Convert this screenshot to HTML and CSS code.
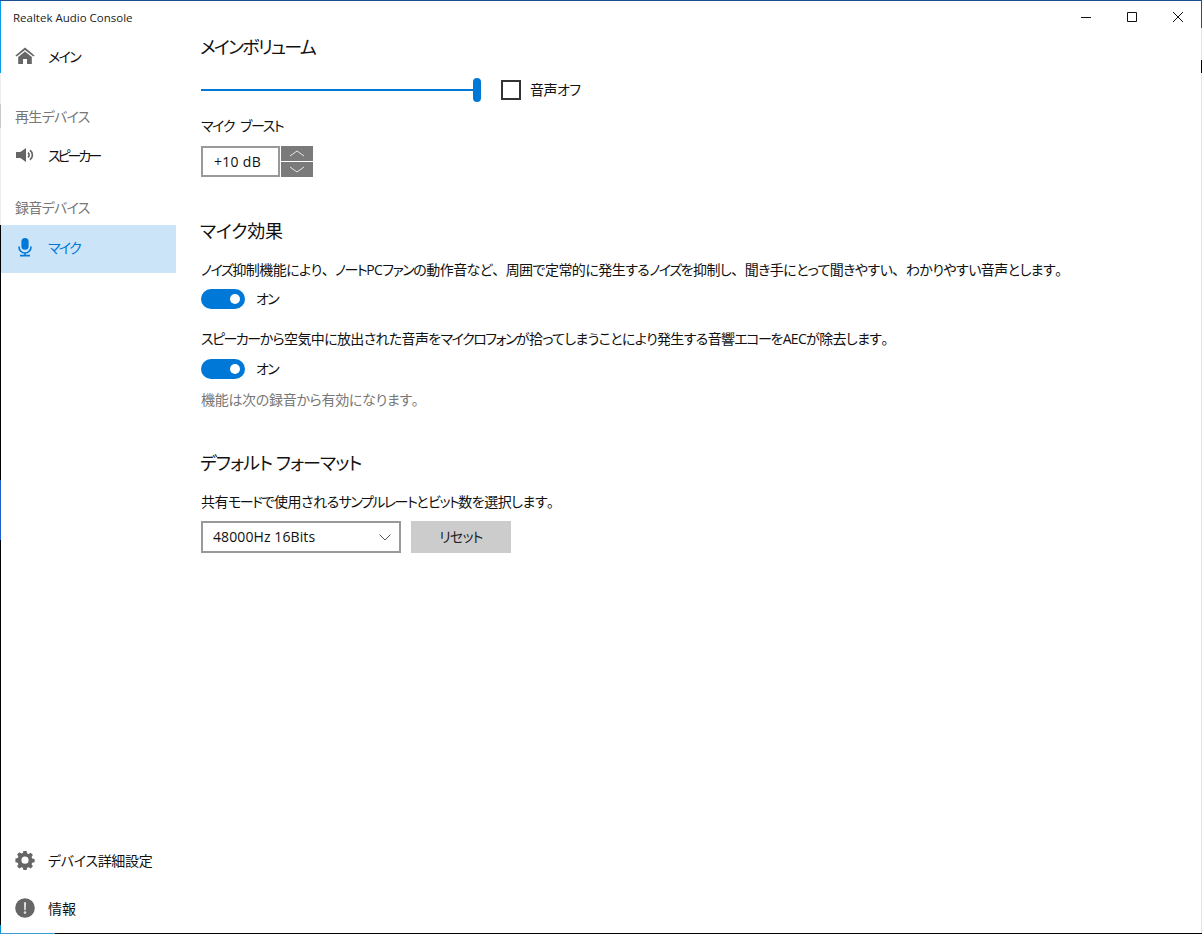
FILE: index.html
```html
<!DOCTYPE html>
<html lang="ja">
<head>
<meta charset="utf-8">
<title>Realtek Audio Console</title>
<link rel="stylesheet" href="styles.css">
</head>
<body>
<div class="window">
  <header class="titlebar">
    <span class="app-title">Realtek Audio Console</span>
    <div class="controls">
      <span class="ctl"><svg width="12" height="12" viewBox="0 0 12 12"><path d="M1 6.5h10" stroke="#111" fill="none"/></svg></span>
      <span class="ctl"><svg width="12" height="12" viewBox="0 0 12 12"><path d="M1.5 1.5h9v9h-9z" stroke="#111" fill="none"/></svg></span>
      <span class="ctl"><svg width="12" height="12" viewBox="0 0 12 12"><path d="M1 1l10 10M11 1L1 11" stroke="#111" fill="none"/></svg></span>
    </div>
  </header>
  <div class="body">
    <nav class="sidebar">
      <div class="nav-top">
        <a class="item">
          <svg class="icon" viewBox="0 0 20 20"><path d="M10 1.6 L0.4 9.4 L1.6 10.6 L10 3.9 L18.4 10.6 L19.6 9.4 Z M3.2 11 L10 5.6 L16.8 11 V18 H12 V13 H8 V18 H3.2 Z" fill="#666"/></svg>
          <span class="tight">メイン</span>
        </a>
        <div class="label label-play">再生デバイス</div>
        <a class="item">
          <svg class="icon" viewBox="0 0 20 20"><path d="M1 7 H5.4 L11 3 V17 L5.4 13 H1 Z" fill="#666"/><path d="M13 7.6 A3.2 3.2 0 0 1 13 12.4 M15 5.2 A6 6 0 0 1 15 14.8" stroke="#666" stroke-width="1.7" fill="none"/></svg>
          <span class="xtight">スピーカー</span>
        </a>
        <div class="label label-rec">録音デバイス</div>
        <a class="item active">
          <svg class="icon" viewBox="0 0 20 20"><rect x="6.4" y="1" width="7.2" height="11.8" rx="3.6" fill="#0078d7"/><path d="M4 9.6 V10 A6 6 0 0 0 16 10 V9.6 M10 16 V18.2 M5 18.6 H15" stroke="#0078d7" stroke-width="1.6" fill="none"/></svg>
          <span class="tight">マイク</span>
        </a>
      </div>
      <div class="nav-bottom">
        <a class="item">
          <svg class="icon" viewBox="0 0 20 20"><path d="M8.4 1h3.2l.5 2.4 1.5.6 2.1-1.3 2.2 2.2-1.3 2.1.6 1.5 2.4.5v3.2l-2.4.5-.6 1.5 1.3 2.1-2.2 2.2-2.1-1.3-1.5.6-.5 2.4H8.4l-.5-2.4-1.5-.6-2.1 1.3-2.2-2.2 1.3-2.1-.6-1.5-2.4-.5V8.5l2.4-.5.6-1.5-1.3-2.1 2.2-2.2 2.1 1.3 1.5-.6z M10 6.6a3.6 3.6 0 1 0 0 7.2 3.6 3.6 0 0 0 0-7.2z" fill="#666" fill-rule="evenodd"/></svg>
          <span class="slight">デバイス詳細設定</span>
        </a>
        <a class="item">
          <svg class="icon" viewBox="0 0 20 20"><circle cx="10" cy="10" r="9.8" fill="#666"/><path d="M8.9 4.2 h2.2 l-.3 8 h-1.6z" fill="#ddd"/><circle cx="10" cy="14.6" r="1.3" fill="#ddd"/></svg>
          <span>情報</span>
        </a>
      </div>
    </nav>
    <main class="content">
      <h2 class="heading h-volume">メインボリューム</h2>
      <div class="volume-row">
        <div class="slider"><span class="thumb"></span></div>
        <span class="checkbox"></span>
        <span class="text mute-label">音声オフ</span>
      </div>
      <div class="text boost-label">マイク ブースト</div>
      <div class="spin">
        <div class="spin-value">+10 dB</div>
        <div class="spin-buttons">
          <span class="spin-btn"><svg width="16" height="7" viewBox="0 0 16 7"><path d="M1 6 L8 1 L15 6" stroke="#e6e6e6" fill="none"/></svg></span>
          <span class="spin-btn"><svg width="16" height="7" viewBox="0 0 16 7"><path d="M1 1 L8 6 L15 1" stroke="#e6e6e6" fill="none"/></svg></span>
        </div>
      </div>
      <h2 class="heading h-effect">マイク効果</h2>
      <p class="text para p-first"><span class="k">ノイズ</span>抑制機能により<span class="fw">、</span><span class="k">ノート</span>PC<span class="k">ファン</span>の動作音など<span class="fw">、</span>周囲で定常的に発生する<span class="k">ノイズ</span>を抑制し<span class="fw">、</span>聞き手にとって聞きやすい<span class="fw">、</span>わかりやすい音声とします<span class="fw">。</span></p>
      <div class="toggle-row toggle-first"><span class="toggle"><span class="knob"></span></span><span class="text on">オン</span></div>
      <p class="text para p-second"><span class="k">スピーカー</span>から空気中に放出された音声を<span class="k">マイクロフォン</span>が拾ってしまうことにより発生する音響<span class="k">エコー</span>をAECが除去します<span class="fw">。</span></p>
      <div class="toggle-row"><span class="toggle"><span class="knob"></span></span><span class="text on">オン</span></div>
      <p class="text para note">機能は次の録音から有効になります<span class="fw">。</span></p>
      <h2 class="heading h-format">デフォルト フォーマット</h2>
      <p class="text para p-format">共有<span class="k">モード</span>で使用される<span class="k">サンプルレート</span>と<span class="k">ビット</span>数を選択します<span class="fw">。</span></p>
      <div class="format-row">
        <div class="select"><span class="select-value">48000Hz 16Bits</span><svg width="12" height="7" viewBox="0 0 12 7"><path d="M0.5 0.5 L6 6 L11.5 0.5" stroke="#555" fill="none"/></svg></div>
        <div class="button">リセット</div>
      </div>
    </main>
  </div>
</div>
</body>
</html>
```
FILE: styles.css
```css
* { box-sizing: border-box; }
html, body { margin: 0; height: 100%; }
body {
  width: 1202px;
  height: 934px;
  overflow: hidden;
  padding: 1px;
  font-family: "Open Sans", "Noto Sans CJK JP", "Noto Sans", sans-serif;
  font-size: 14px;
  font-feature-settings: "palt";
  color: #111;
  background:
    linear-gradient(#1b4f8f, #1b4f8f) 0 0 / 100% 1px no-repeat,
    linear-gradient(90deg, #3a9ccc 0 55px, #000 55px) 0 100% / 100% 1px no-repeat,
    linear-gradient(#0a9be8 0 73px, #eee 73px 104px, #c8c8c8 104px 128px, #eee 128px 225px, #000 225px 480px, #1a5fc8 480px 540px, #000 540px 925px, #0a8fd0 925px) 0 0 / 1px 100% no-repeat,
    linear-gradient(#1b4f8f 0 28px, #e4e4e4 28px 60px, #000 60px 73px, #e4e4e4 73px) 100% 0 / 1px 100% no-repeat,
    #fff;
}
.window {
  display: flex;
  flex-direction: column;
  height: 100%;
  background: #fff;
}
.titlebar {
  display: flex;
  justify-content: space-between;
  height: 32px;
  flex: none;
}
.app-title {
  font-size: 11.5px;
  line-height: 33px;
  padding-left: 12px;
  color: #222;
}
.controls { display: flex; }
.ctl {
  width: 46px;
  display: flex;
  align-items: center;
  justify-content: center;
}
.body { display: flex; flex: 1; min-height: 0; }
.sidebar {
  width: 175px;
  flex: none;
  display: flex;
  flex-direction: column;
  justify-content: space-between;
}
.item {
  display: flex;
  align-items: center;
  height: 48px;
  padding-left: 14px;
  padding-bottom: 2px;
  gap: 13px;
  color: #111;
}
.icon { width: 20px; height: 20px; flex: none; }
.item.active { background: #cce4f7; color: #0078d7; padding-bottom: 4px; }
.tight { letter-spacing: -1.7px; }
.xtight { letter-spacing: -3px; }
.slight { letter-spacing: -0.3px; }
.label {
  color: #777;
  height: 24px;
  line-height: 24px;
  padding-left: 14px;
  letter-spacing: -0.7px;
}
.label-play { margin-top: 24px; margin-bottom: 3px; }
.label-rec { margin-top: 16px; margin-bottom: 5px; }
.content { flex: 1; padding-left: 24px; }
.heading { margin: 0; font-weight: 400; font-size: 18px; line-height: 28px; color: #111; }
.text { line-height: 20px; }
.h-volume { letter-spacing: -1.75px; }
.volume-row { display: flex; align-items: center; height: 24px; margin-top: 16px; padding-left: 1px; }
.slider { position: relative; width: 280px; height: 2px; background: #0078d7; margin-top: 1px; }
.thumb {
  position: absolute;
  right: 0;
  top: -11px;
  width: 8px;
  height: 24px;
  border-radius: 4px;
  background: #0078d7;
}
.checkbox { width: 20px; height: 20px; border: 2px solid #333; margin: 2px 9px 0 20px; }
.mute-label { letter-spacing: -0.5px; margin-top: 2px; }
.boost-label { margin-top: 15px; padding-left: 1px; letter-spacing: -1.4px; word-spacing: 4px; }
.spin { display: flex; height: 31px; margin-top: 10px; margin-left: 1px; }
.spin-value {
  width: 79px;
  border: 2px solid #999;
  padding-left: 11px;
  line-height: 27px;
  letter-spacing: 0.3px;
}
.spin-buttons { display: flex; flex-direction: column; gap: 1px; width: 32px; margin-left: 1px; }
.spin-btn {
  flex: 1;
  background: #7a7a7a;
  display: flex;
  align-items: center;
  justify-content: center;
}
.h-effect { margin-top: 40px; letter-spacing: -0.2px; }
.para { margin: 0; padding-left: 1px; letter-spacing: -0.55px; white-space: nowrap; }
.k { letter-spacing: -1.5px; }
.fw { font-feature-settings: normal; }
.p-first { margin-top: 15px; }
.p-second { margin-top: 20px; letter-spacing: -0.65px; }
.toggle-row { display: flex; align-items: center; gap: 11px; height: 20px; margin-top: 10px; margin-left: 1px; }
.toggle-first { margin-top: 9px; }
.on { letter-spacing: -1.5px; }
.toggle {
  position: relative;
  width: 44px;
  height: 20px;
  border-radius: 10px;
  background: #0078d7;
}
.knob {
  position: absolute;
  right: 5px;
  top: 5px;
  width: 10px;
  height: 10px;
  border-radius: 50%;
  background: #fff;
}
.note { margin-top: 11px; color: #777; letter-spacing: -0.3px; }
.h-format { margin-top: 39px; letter-spacing: -0.9px; }
.p-format { margin-top: 15px; letter-spacing: -0.5px; }
.format-row { display: flex; gap: 10px; margin-top: 9px; margin-left: 1px; }
.select {
  width: 200px;
  height: 32px;
  border: 2px solid #999;
  display: flex;
  align-items: center;
  justify-content: space-between;
  padding: 0 8px 0 10px;
  letter-spacing: 0.1px;
}
.select-value { margin-bottom: 2px; }
.button {
  width: 100px;
  height: 32px;
  background: #ccc;
  text-align: center;
  line-height: 32px;
  color: #222;
  letter-spacing: -0.8px;
}
```
